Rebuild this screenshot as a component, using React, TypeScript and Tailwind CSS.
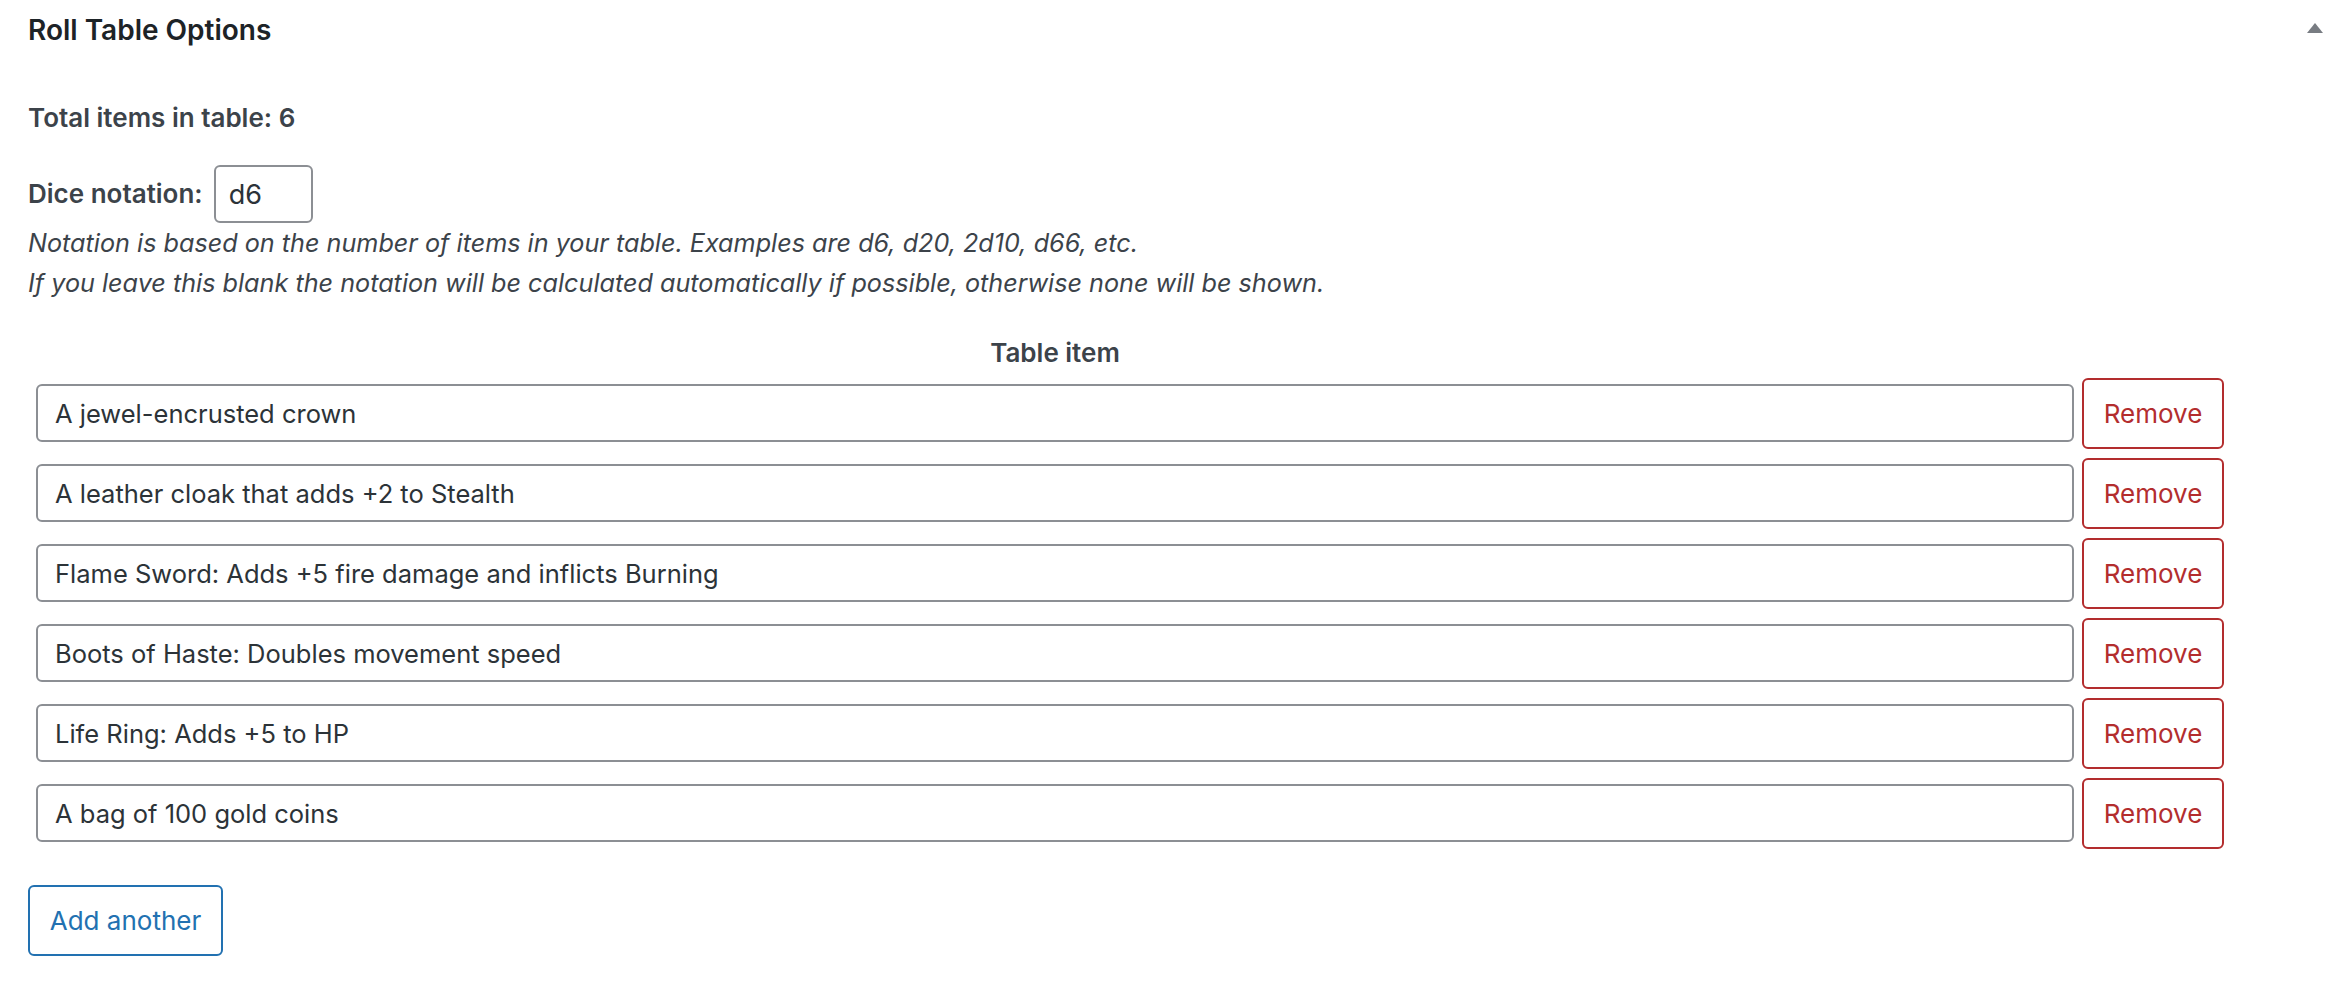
import React from 'react';

const items = [
  'A jewel-encrusted crown',
  'A leather cloak that adds +2 to Stealth',
  'Flame Sword: Adds +5 fire damage and inflicts Burning',
  'Boots of Haste: Doubles movement speed',
  'Life Ring: Adds +5 to HP',
  'A bag of 100 gold coins',
];

export default function App() {
  return (
    <div className="w-[2348px] h-[986px] bg-white text-[#3c434a] font-['Inter',sans-serif] overflow-hidden">
      {/* Postbox header */}
      <div className="flex items-center justify-between h-[60px] pl-[28px] pr-[25px]">
        <h2 className="text-[28px] leading-[40px] font-semibold text-[#1d2327]">Roll Table Options</h2>
        <svg width="16" height="10" viewBox="0 0 16 10" className="mb-[4px]">
          <polygon points="8,0 16,10 0,10" fill="#787c82" />
        </svg>
      </div>

      <div className="pl-[28px] pr-[25px]">
        <p className="mt-[38px] text-[26px] leading-[40px] font-semibold">Total items in table: {items.length}</p>

        <div className="mt-[27px] flex items-center h-[58px]">
          <label className="text-[26px] leading-[40px] font-semibold">Dice notation:</label>
          <input
            readOnly
            value="d6"
            className="ml-[11px] w-[99px] h-[58px] px-[13px] border-2 border-[#8c8f94] rounded-[6px] text-[27px] text-[#2c3338] outline-none"
          />
        </div>

        <div className="text-[25.2px] leading-[40px] italic">
          <p>Notation is based on the number of items in your table. Examples are d6, d20, 2d10, d66, etc.</p>
          <p>If you leave this blank the notation will be calculated automatically if possible, otherwise none will be shown.</p>
        </div>

        {/* Items table */}
        <div className="mt-[30px] pl-[8px] w-[2196px]">
          <div className="flex">
            <div className="w-[2038px] text-center text-[26px] leading-[40px] font-semibold">Table item</div>
          </div>
          {items.map((item) => (
            <div key={item} className="flex items-center gap-[8px] h-[80px]">
              <input
                readOnly
                value={item}
                className="w-[2038px] h-[58px] px-[17px] border-2 border-[#8c8f94] rounded-[6px] text-[25.5px] text-[#2c3338] outline-none"
              />
              <button className="w-[142px] h-[71px] border-2 border-[#b32d2e] rounded-[6px] text-[26px] text-[#b32d2e] bg-white">
                Remove
              </button>
            </div>
          ))}
        </div>

        <button className="mt-[32px] w-[195px] h-[71px] border-2 border-[#2271b1] rounded-[6px] text-[26px] text-[#2271b1] bg-white">
          Add another
        </button>
      </div>
    </div>
  );
}
